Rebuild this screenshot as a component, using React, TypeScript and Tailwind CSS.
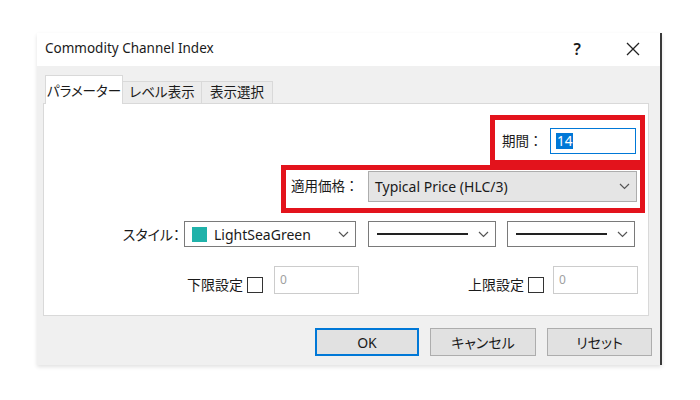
import React from "react";

const FONT = "font-['Noto_Sans','Noto_Sans_CJK_JP',sans-serif] [font-feature-settings:'palt']";

function Chevron() {
  return (
    <svg width="11" height="7" viewBox="0 0 11 7" className="shrink-0">
      <polyline points="1,1 5.5,5.5 10,1" fill="none" stroke="#555" strokeWidth="1.2" />
    </svg>
  );
}

function LineCombo() {
  return (
    <div className="w-[128px] h-[26px] bg-white border border-[#7a7a7a] flex items-center pl-[8px] pr-[6px] gap-[10px]">
      <div className="flex-1 h-[1.5px] bg-[#222]" />
      <Chevron />
    </div>
  );
}

function Checkbox() {
  return <div className="w-[16px] h-[16px] border border-[#333] bg-white shrink-0" />;
}

function DisabledInput() {
  return (
    <div className="w-[85px] h-[28px] bg-white border border-[#cccccc] pl-[5px] flex items-center text-[12px] text-[#a0a0a0]">
      0
    </div>
  );
}

export default function App() {
  return (
    <div className={`min-h-[400px] bg-white pt-[33px] pl-[37px] text-[#1a1a1a] ${FONT}`}>
      <div className="w-[625px] h-[332px] flex flex-col border-r-2 border-[#3a3a3a] shadow-[0_2px_4px_rgba(0,0,0,0.12)]">
        {/* title bar */}
        <div className="h-[33px] bg-white flex items-center pl-[8px] pb-[2px]">
          <span className="text-[13.5px]">Commodity Channel Index</span>
          <span className="ml-auto text-[16px] font-semibold mr-[45px]">?</span>
          <svg width="14" height="14" viewBox="0 0 14 14" className="mr-[20px]">
            <path d="M1 1 L13 13 M13 1 L1 13" stroke="#222" strokeWidth="1.3" />
          </svg>
        </div>

        {/* body */}
        <div className="flex-1 bg-[#f0f0f0] flex flex-col pt-[9px] pl-[6px] pr-[11px]">
          {/* tabs */}
          <div className="h-[28px] flex items-end pl-[2px] text-[13.5px]">
            <div className="relative z-10 -mb-px w-[78px] h-[29px] bg-white border border-b-0 border-[#d9d9d9] flex items-center justify-center pt-[2px]">
              パラメーター
            </div>
            <div className="w-[79px] h-[22px] bg-[#ececec] border border-b-0 border-l-0 border-[#d9d9d9] flex items-center justify-center">
              レベル表示
            </div>
            <div className="w-[71px] h-[22px] bg-[#ececec] border border-b-0 border-l-0 border-[#d9d9d9] flex items-center justify-center">
              表示選択
            </div>
          </div>

          {/* panel */}
          <div className="h-[213px] bg-white border border-[#d9d9d9] flex flex-col pt-[11px] pr-[3px] text-[14px]">
            <div className="self-end w-[155px] h-[50px] border-[5px] border-[#e3131c] flex items-center justify-between pl-[7px] pr-[4px] pt-[2px]">
              <span className="text-[13.5px] [font-feature-settings:normal]">期間：</span>
              <div className="w-[86px] h-[26px] border border-[#0078d7] flex items-center pl-[5px]">
                <span className="bg-[#0078d7] text-white leading-[16px] px-px text-[13.5px]">14</span>
              </div>
            </div>
            <div className="self-end w-[364px] h-[48px] border-[5px] border-[#e3131c] flex items-start justify-between pl-[5px] pr-[3px] pt-[1px]">
              <span className="mt-[5px] text-[13.5px] [font-feature-settings:normal]">適用価格：</span>
              <div className="w-[269px] h-[31px] bg-[#e5e5e5] border border-[#adadad] flex items-center pl-[6px] pr-[6px]">
                <span className="flex-1">Typical Price (HLC/3)</span>
                <Chevron />
              </div>
            </div>

            {/* style row */}
            <div className="mt-[8px] flex items-center justify-end pr-[10px]">
              <span className="mr-[4px]">スタイル：</span>
              <div className="w-[172px] h-[26px] bg-white border border-[#7a7a7a] flex items-center pl-[7px] pr-[6px] mr-[12px]">
                <div className="w-[15px] h-[15px] bg-[#20b2aa] mr-[7px]" />
                <span className="flex-1">LightSeaGreen</span>
                <Chevron />
              </div>
              <div className="mr-[11px]">
                <LineCombo />
              </div>
              <LineCombo />
            </div>

            {/* limit row */}
            <div className="mt-[19px] flex items-start">
              <div className="w-[315px] flex items-start justify-end">
                <div className="flex items-center gap-[4px] mt-[8px] mr-[11px]">
                  <span>下限設定</span>
                  <Checkbox />
                </div>
                <DisabledInput />
              </div>
              <div className="w-[279px] flex items-start justify-end">
                <div className="flex items-center gap-[4px] mt-[8px] mr-[9px]">
                  <span>上限設定</span>
                  <Checkbox />
                </div>
                <DisabledInput />
              </div>
            </div>
          </div>

          {/* buttons */}
          <div className="mt-[12px] flex justify-end gap-[11px] -mr-[3px] text-[14px]">
            <button className="w-[104px] h-[28px] bg-[#e1e1e1] border-2 border-[#0078d7]">OK</button>
            <button className="w-[106px] h-[28px] bg-[#e1e1e1] border border-[#adadad]">キャンセル</button>
            <button className="w-[105px] h-[28px] bg-[#e1e1e1] border border-[#adadad]">リセット</button>
          </div>
        </div>
      </div>
    </div>
  );
}
